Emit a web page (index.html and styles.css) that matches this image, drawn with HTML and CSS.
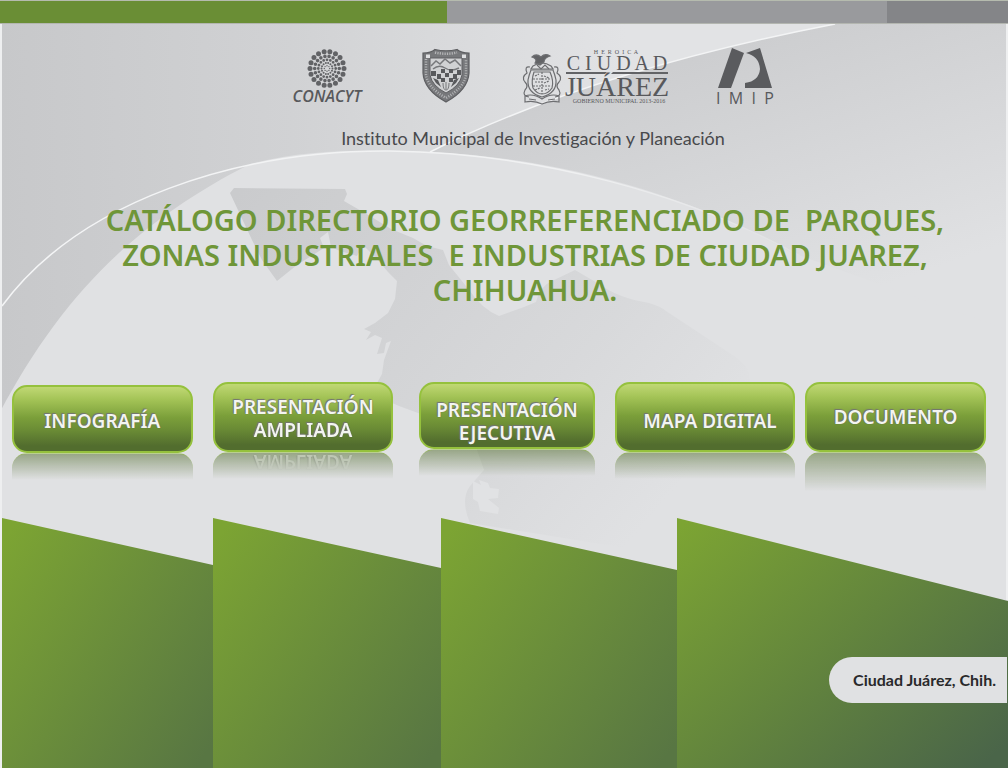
FILE: index.html
```html
<!DOCTYPE html>
<html lang="es">
<head>
<meta charset="utf-8">
<meta name="viewport" content="width=device-width, initial-scale=1">
<title>Catálogo Directorio Georreferenciado</title>
<link rel="stylesheet" href="styles.css">
</head>
<body>
<div class="page">
  <svg class="backdrop" viewBox="0 0 1008 768" preserveAspectRatio="none" aria-hidden="true">
    <defs>
      <linearGradient id="sky" x1="0" y1="0" x2="1" y2="0"><stop offset="0" stop-color="#c7c8ca"/><stop offset=".35" stop-color="#d1d2d4"/><stop offset=".75" stop-color="#e2e3e5"/></linearGradient>
      <linearGradient id="east" gradientUnits="userSpaceOnUse" x1="650" y1="30" x2="750" y2="330"><stop offset="0" stop-color="#cacbcd"/><stop offset="1" stop-color="#e0e1e3"/></linearGradient>
      <linearGradient id="land" gradientUnits="userSpaceOnUse" x1="240" y1="190" x2="640" y2="530"><stop offset="0" stop-color="#cacbcd"/><stop offset=".7" stop-color="#d8d9db"/><stop offset="1" stop-color="#e0e1e3"/></linearGradient>
      <linearGradient id="rim" x1="0" y1="0" x2="1" y2="0"><stop offset="0" stop-color="#f4f5f6"/><stop offset=".7" stop-color="#f0f1f2"/><stop offset="1" stop-color="#e0e1e3"/></linearGradient>
      <linearGradient id="leaf" x1="0" y1=".1" x2="1" y2=".9"><stop offset="0" stop-color="#7ca433"/><stop offset="1" stop-color="#587643"/></linearGradient>
      <linearGradient id="leafDark" x1="0" y1=".05" x2="1" y2=".9"><stop offset="0" stop-color="#7ca433"/><stop offset=".5" stop-color="#63853d"/><stop offset="1" stop-color="#4a6549"/></linearGradient>
    </defs>
    <rect width="1008" height="768" fill="#e0e1e3"/>
    <path d="M0 24H835C690 52 560 88 430 152Q300 180 0 420Z" fill="url(#sky)"/>
    <path d="M835 24H1008V330H800C700 215 570 160 430 152C550 92 690 52 835 24Z" fill="url(#east)"/>
    <path d="M430 152C560 158 690 195 790 252L1008 330V768H0V412C60 300 130 225 250 164C310 148 370 150 430 152Z" fill="#e0e1e3"/>
    <path d="M2 306C80 200 240 150 390 151C540 153 690 195 800 256" fill="none" stroke="url(#rim)" stroke-width="1.5"/>
    <path d="M430 152C550 92 690 52 835 24" fill="none" stroke="#f3f4f5" stroke-width="1.5"/>
    <path d="M230 193L234 188L345 189L347 194L344 201L370 216L391 229L413 238L427 246L443 250L449 265L470 291Q482 309 499 316L524 307L536 302Q540 286 552 281L575 270L599 284Q618 298 649 303Q660 306 666 311L734 356Q747 364 749 374L754 420L700 560L470 523Q460 500 470 486L484 470L470 430L418 413L399 406L390 402L374 396L370 390L377 383L382 374L384 360L391 341L386 343L384 353L377 354L382 338L375 335L366 340L371 332L364 329L375 323L388 313L395 299L397 281L388 272L377 259L363 245L357 256L340 251L331 247L328 232L320 238L324 248L297 265L277 281L262 260L252 240Z" fill="url(#land)"/>
    <path d="M473 481L481 485L479 480L488 483L490 488L499 489L498 498L488 499L499 508L498 514L480 511L478 502L473 499Z" fill="#e1e2e4"/>
    <path d="M2 518L213 565V768H2Z" fill="url(#leaf)"/>
    <path d="M213 518L441 568V768H213Z" fill="url(#leaf)"/>
    <path d="M441 518L677 570V768H441Z" fill="url(#leaf)"/>
    <path d="M677 518L1008 601V768H677Z" fill="url(#leafDark)"/>
    <path d="M1 24V768M1007 24V600" stroke="#eeeff0" stroke-width="2"/>
  </svg>

  <div class="stripe"><span class="stripe-green"></span><span class="stripe-gray"></span><span class="stripe-dark"></span></div>

  <header class="header">
    <div class="logos">
      <svg class="logo" width="80" height="60" viewBox="0 0 80 60" role="img" aria-label="CONACYT">
        <g fill="none" stroke="#626366" stroke-linecap="round">
          <circle cx="36" cy="20.500" r="17" stroke-width="5" pathLength="180" stroke-dasharray="0 10"/>
          <circle cx="36" cy="20.500" r="12.300" stroke-width="3.600" pathLength="180" stroke-dasharray="0 10"/>
          <circle cx="36" cy="20.500" r="8.700" stroke-width="2.800" pathLength="160" stroke-dasharray="0 10"/>
          <circle cx="36" cy="20.500" r="5.500" stroke-width="2" pathLength="140" stroke-dasharray="0 10"/>
          <circle cx="36" cy="20.500" r="2.700" stroke-width="1.400" pathLength="80" stroke-dasharray="0 10"/>
        </g>
        <text class="conacyt" x="36" y="54" text-anchor="middle">CONACYT</text>
      </svg>
      <svg class="logo" width="50" height="60" viewBox="0 0 50 60" role="img" aria-label="Escudo de Chihuahua">
        <path d="M2 5Q10 5 14 1.500Q25 4 36 1.500Q40 5 48 5V25Q47 42 25 54Q3 42 2 25Z" fill="#77787b" stroke="#5d5e61" stroke-width="1.200"/>
        <path d="M5 11V26Q6 39 25 50Q44 39 45 26V11" fill="none" stroke="#b4b5b7" stroke-width="2.500" stroke-dasharray="1 1.500"/>
        <path d="M14 4.500Q25 7 36 4.500" fill="none" stroke="#b4b5b7" stroke-width="2.500" stroke-dasharray="1.200 1.200"/>
        <path d="M9 10H41V27Q39 38 25 45Q11 38 9 27Z" fill="#d0d1d3" stroke="#606164"/>
        <path d="M10 18L15 13L19 16L24 11L29 15L34 12L40 18M12 21Q18 16 24 20T38 20" fill="none" stroke="#77787b" stroke-width="1.500"/>
        <path d="M10 23H15V28H10ZM20 21H24V25H20ZM28 21H32V25H28ZM24 25H28V29H24ZM16 26H20V31H16ZM32 26H36V31H32ZM36 22H40V27H36ZM20 30H24V34H20ZM28 30H32V34H28ZM12 30L17 32L20 39L15 35ZM38 30L33 32L30 39L35 35Z" fill="#58595c"/>
        <path d="M22 35Q22 42 25 42T28 35M25 34V41" fill="none" stroke="#77787b"/>
        <path d="M5 6.500H9V10H5ZM41 6.500H45V10H41Z" fill="#dfe0e2"/>
      </svg>
      <svg class="logo" width="147" height="60" viewBox="0 0 147 60" role="img" aria-label="Heroica Ciudad Juárez, Gobierno Municipal 2013-2016">
        <g fill="none" stroke="#6d6e71" stroke-width="1.200">
          <path d="M11 9Q15 5 20 9Q24 5 29 8Q23 10 23 14L19 17L14 15Q17 11 11 9Z" fill="#626366"/>
          <path d="M12 18Q21 12 30 18L32 21H10Z"/>
          <path d="M10 22Q8 27 7 32Q6 45 21 49Q36 45 35 32Q34 27 32 22Z"/>
          <path d="M13 24Q10 33 12 40Q16 46 21 46Q27 46 31 40Q33 33 29 24Z"/>
          <path d="M9 19Q3 18 6 25Q0 29 4 34Q8 38 4 42Q1 48 8 49M33 19Q39 18 36 25Q42 29 38 34Q34 38 38 42Q41 48 34 49"/>
          <path d="M4 48Q12 45 21 51Q30 45 38 48V54Q29 52 21 56Q13 52 4 54ZM8 51L15 52M27 52L34 51"/>
          <path d="M21 24V46M12 31H30M12 38H30M14 28L18 26M14 34H19M23 28L28 30M23 35L28 33M24 42L28 41M14 42L19 40" stroke-dasharray="2 1"/>
          <path d="M16 17L20 21L24 17L28 21" />
        </g>
        <text class="heroica" x="95" y="6" text-anchor="middle">H&#160; E&#160; R&#160; O&#160; I&#160; C&#160; A</text>
        <text class="ciudad" x="96" y="22" text-anchor="middle">C I U D A D</text>
        <path d="M45 24H86L84 26H45ZM92 24H147V26H90Z" fill="#626366"/>
        <text class="juarez" x="96" y="48" text-anchor="middle">JUÁREZ</text>
        <text class="gobierno" x="98" y="55" text-anchor="middle">GOBIERNO MUNICIPAL 2013-2016</text>
      </svg>
      <svg class="logo" width="58" height="60" viewBox="0 0 58 60" role="img" aria-label="IMIP">
        <path d="M14 0L26 5L13 40H0Z" fill="#5a5b5e"/>
        <path d="M28 5L42 0L54 40H27V35Q41 33 42 21Q41 8 28 5Z" fill="#5a5b5e"/>
        <text class="imip" x="27" y="56" text-anchor="middle">I&#160; M&#160; I&#160; P</text>
      </svg>
    </div>
    <p class="institute">Instituto Municipal de Investigación y Planeación</p>
  </header>

  <main class="main">
    <h1 class="title">CATÁLOGO DIRECTORIO GEORREFERENCIADO DE&nbsp; PARQUES,<br>ZONAS INDUSTRIALES&nbsp; E INDUSTRIAS DE CIUDAD JUAREZ,<br>CHIHUAHUA.</h1>
    <nav class="menu" aria-label="Secciones">
      <button class="tile tile-info" type="button">INFOGRAFÍA</button>
      <button class="tile tile-wide" type="button">PRESENTACIÓN<span class="mirrored">AMPLIADA</span></button>
      <button class="tile tile-exec" type="button">PRESENTACIÓN<br>EJECUTIVA</button>
      <button class="tile tile-map" type="button">MAPA DIGITAL</button>
      <button class="tile tile-doc" type="button">DOCUMENTO</button>
    </nav>
  </main>

  <footer class="place">Ciudad Juárez, Chih.</footer>
</div>
</body>
</html>
```
FILE: styles.css
```css
* { box-sizing: border-box; }
body { margin: 0; font-family: "Noto Sans", "Open Sans", sans-serif; }
.page {
  position: relative;
  isolation: isolate;
  min-height: 100vh;
  display: flex;
  flex-direction: column;
  overflow: hidden;
  background: #e0e1e3;
}
.backdrop { position: absolute; inset: 0; z-index: -1; width: 100%; height: 100%; }

.stripe { display: flex; height: 24px; border-top: 1px solid #b5bbae; border-bottom: 1px solid #b3b6b0; }
.stripe-green { flex: 447; background: #6a8e35; }
.stripe-gray { flex: 440; background: #999a9d; }
.stripe-dark { flex: 121; background: #848588; }

.header { padding: 24px 0 0 58px; text-align: center; }
.logos { display: flex; justify-content: center; gap: 50px; }
.logo { display: block; flex: none; overflow: visible; }
.logo text { fill: #58595c; }
.conacyt { font: italic 600 16px "Open Sans", sans-serif; }
.heroica { font: 6px "Liberation Serif", serif; }
.ciudad { font: 20px "Liberation Serif", serif; }
.juarez { font: 28px "Liberation Serif", serif; }
.gobierno { font: 6px "Liberation Serif", serif; }
.imip { font: 16px "Open Sans", sans-serif; }
.institute {
  margin: 18px 0 0;
  font: 18px/24px Lato, sans-serif;
  font-variant-ligatures: none;
  color: #48494c;
}

.main { padding-top: 52px; }
.title {
  margin: 0;
  padding-left: 42px;
  font-size: 29px;
  line-height: 35px;
  font-weight: 600;
  text-align: center;
  color: #6f9638;
}
.menu { display: flex; align-items: flex-start; gap: 20px; margin-top: 75px; padding: 0 22px 0 12px; }
.tile {
  position: relative;
  flex: 181 1 0;
  min-width: 0;
  height: 70px;
  padding: 4px 5px 0;
  border: 2px solid #95c13d;
  border-radius: 15px;
  background: linear-gradient(#c0d874, #a3c356 20%, #7b9f3a 48%, #6a8b35 68%, #526d2e 92%);
  color: #f3f5f0;
  font: 600 19px/23px "Noto Sans", "Open Sans", sans-serif;
  text-shadow: 0 0 1px #555, -1px -1px 1px #777;
  cursor: pointer;
}
.tile::after {
  content: "";
  position: absolute;
  inset: 100% -2px auto;
  height: 26px;
  margin-top: 2px;
  border-radius: 15px 15px 0 0;
  background: linear-gradient(rgba(82, 109, 46, .5), rgba(110, 145, 60, 0));
  border-top: 1px solid rgba(149, 193, 61, .5);
}
.tile-info { height: 68px; margin-top: 3px; }
.tile-exec { flex-grow: 175; height: 67px; margin-left: 6px; padding: 12px 5px 0; }
.tile-map { padding: 8px 0 0 10px; }
.tile-doc { margin-left: -10px; padding-top: 0; }
.tile-doc::after { height: 38px; }
.mirrored {
  display: block;
  position: relative;
  z-index: 1;
  -webkit-box-reflect: below 8px linear-gradient(transparent 10%, rgba(0, 0, 0, .5));
}

.place {
  align-self: flex-end;
  margin: auto 1px 65px 0;
  padding: 0 11px 0 24px;
  border-radius: 23px 0 0 23px;
  background: #e0e1e3;
  color: #29292b;
  font: 700 16px/46px Lato, sans-serif;
}
```
